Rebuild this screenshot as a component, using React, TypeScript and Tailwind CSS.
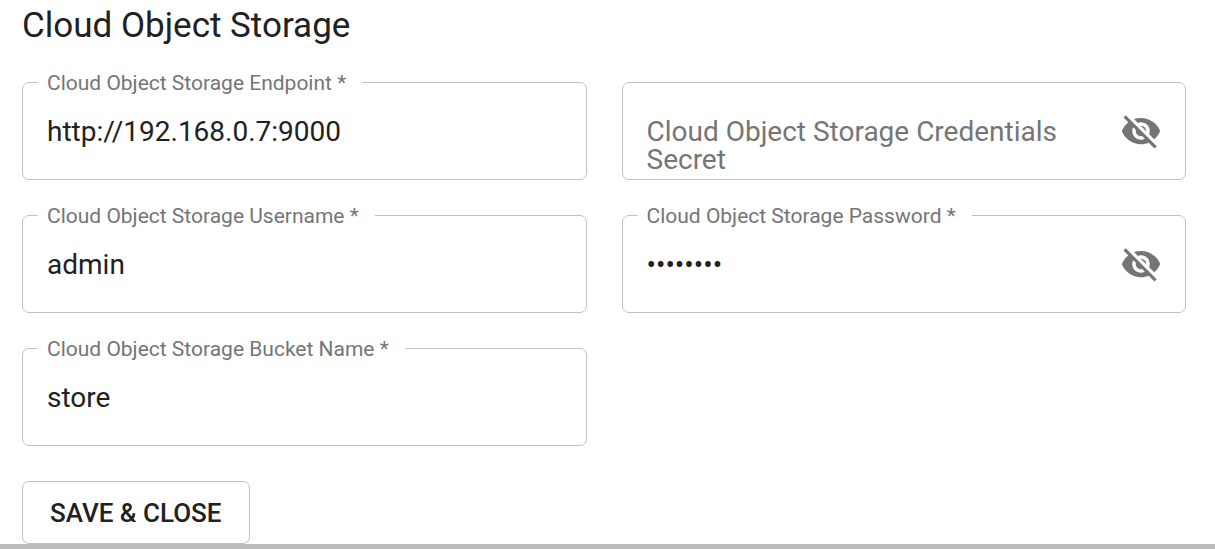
import { useState } from "react";
import { MdVisibility, MdVisibilityOff } from "react-icons/md";

type FieldProps = {
  id: string;
  label: string;
  initialValue?: string;
  required?: boolean;
  secret?: boolean;
};

function Field({ id, label, initialValue = "", required = false, secret = false }: FieldProps) {
  const [value, setValue] = useState(initialValue);
  const [visible, setVisible] = useState(false);
  const floating = value !== "";

  return (
    <div className="relative flex h-[98px] items-center rounded-[7px] border border-[#c0c0c0] pr-[23px] pl-6">
      <label
        htmlFor={id}
        className={
          floating
            ? "absolute -top-[14px] left-[15px] bg-white pr-4 pl-[9px] text-[21px] leading-[28px] text-[#757575]"
            : "pointer-events-none absolute top-[35px] right-[88px] left-6 text-[28px] leading-[28px] text-[#757575]"
        }
      >
        {label}
        {required && <span aria-hidden="true"> *</span>}
      </label>
      <input
        id={id}
        type={secret && !visible ? "password" : "text"}
        value={value}
        required={required}
        autoComplete="off"
        onChange={(event) => setValue(event.target.value)}
        className="w-full min-w-0 flex-1 bg-transparent pt-0.5 text-[28px] leading-[34px] text-[#212121] outline-none"
      />
      {secret && (
        <button
          type="button"
          aria-label={`Toggle ${label} visibility`}
          onClick={() => setVisible(!visible)}
          className="shrink-0 text-[#757575]"
        >
          {visible ? <MdVisibility size={42} /> : <MdVisibilityOff size={42} />}
        </button>
      )}
    </div>
  );
}

export default function App() {
  return (
    <div className="bg-white font-['Roboto',sans-serif] text-[#212121]">
      <main className="pr-[29px] pl-[22px]">
        <h1 className="text-[35px] leading-[52px]">Cloud Object Storage</h1>
        <form className="mt-[30px]" onSubmit={(event) => event.preventDefault()}>
          <div className="grid grid-cols-2 gap-[35px]">
            <Field id="endpoint" label="Cloud Object Storage Endpoint" initialValue="http://192.168.0.7:9000" required />
            <Field id="credentials-secret" label="Cloud Object Storage Credentials Secret" secret />
            <Field id="username" label="Cloud Object Storage Username" initialValue="admin" required />
            <Field id="password" label="Cloud Object Storage Password" initialValue="password" required secret />
            <Field id="bucket" label="Cloud Object Storage Bucket Name" initialValue="store" required />
          </div>
          <button
            type="submit"
            className="mt-[35px] block rounded-[7px] border border-[#c0c0c0] px-[27px] pt-[15px] pb-[13px] text-[26px] leading-[33px] font-medium uppercase"
          >
            Save &amp; Close
          </button>
        </form>
      </main>
      <div className="h-[5px] bg-[#bbbbbb]" />
    </div>
  );
}
